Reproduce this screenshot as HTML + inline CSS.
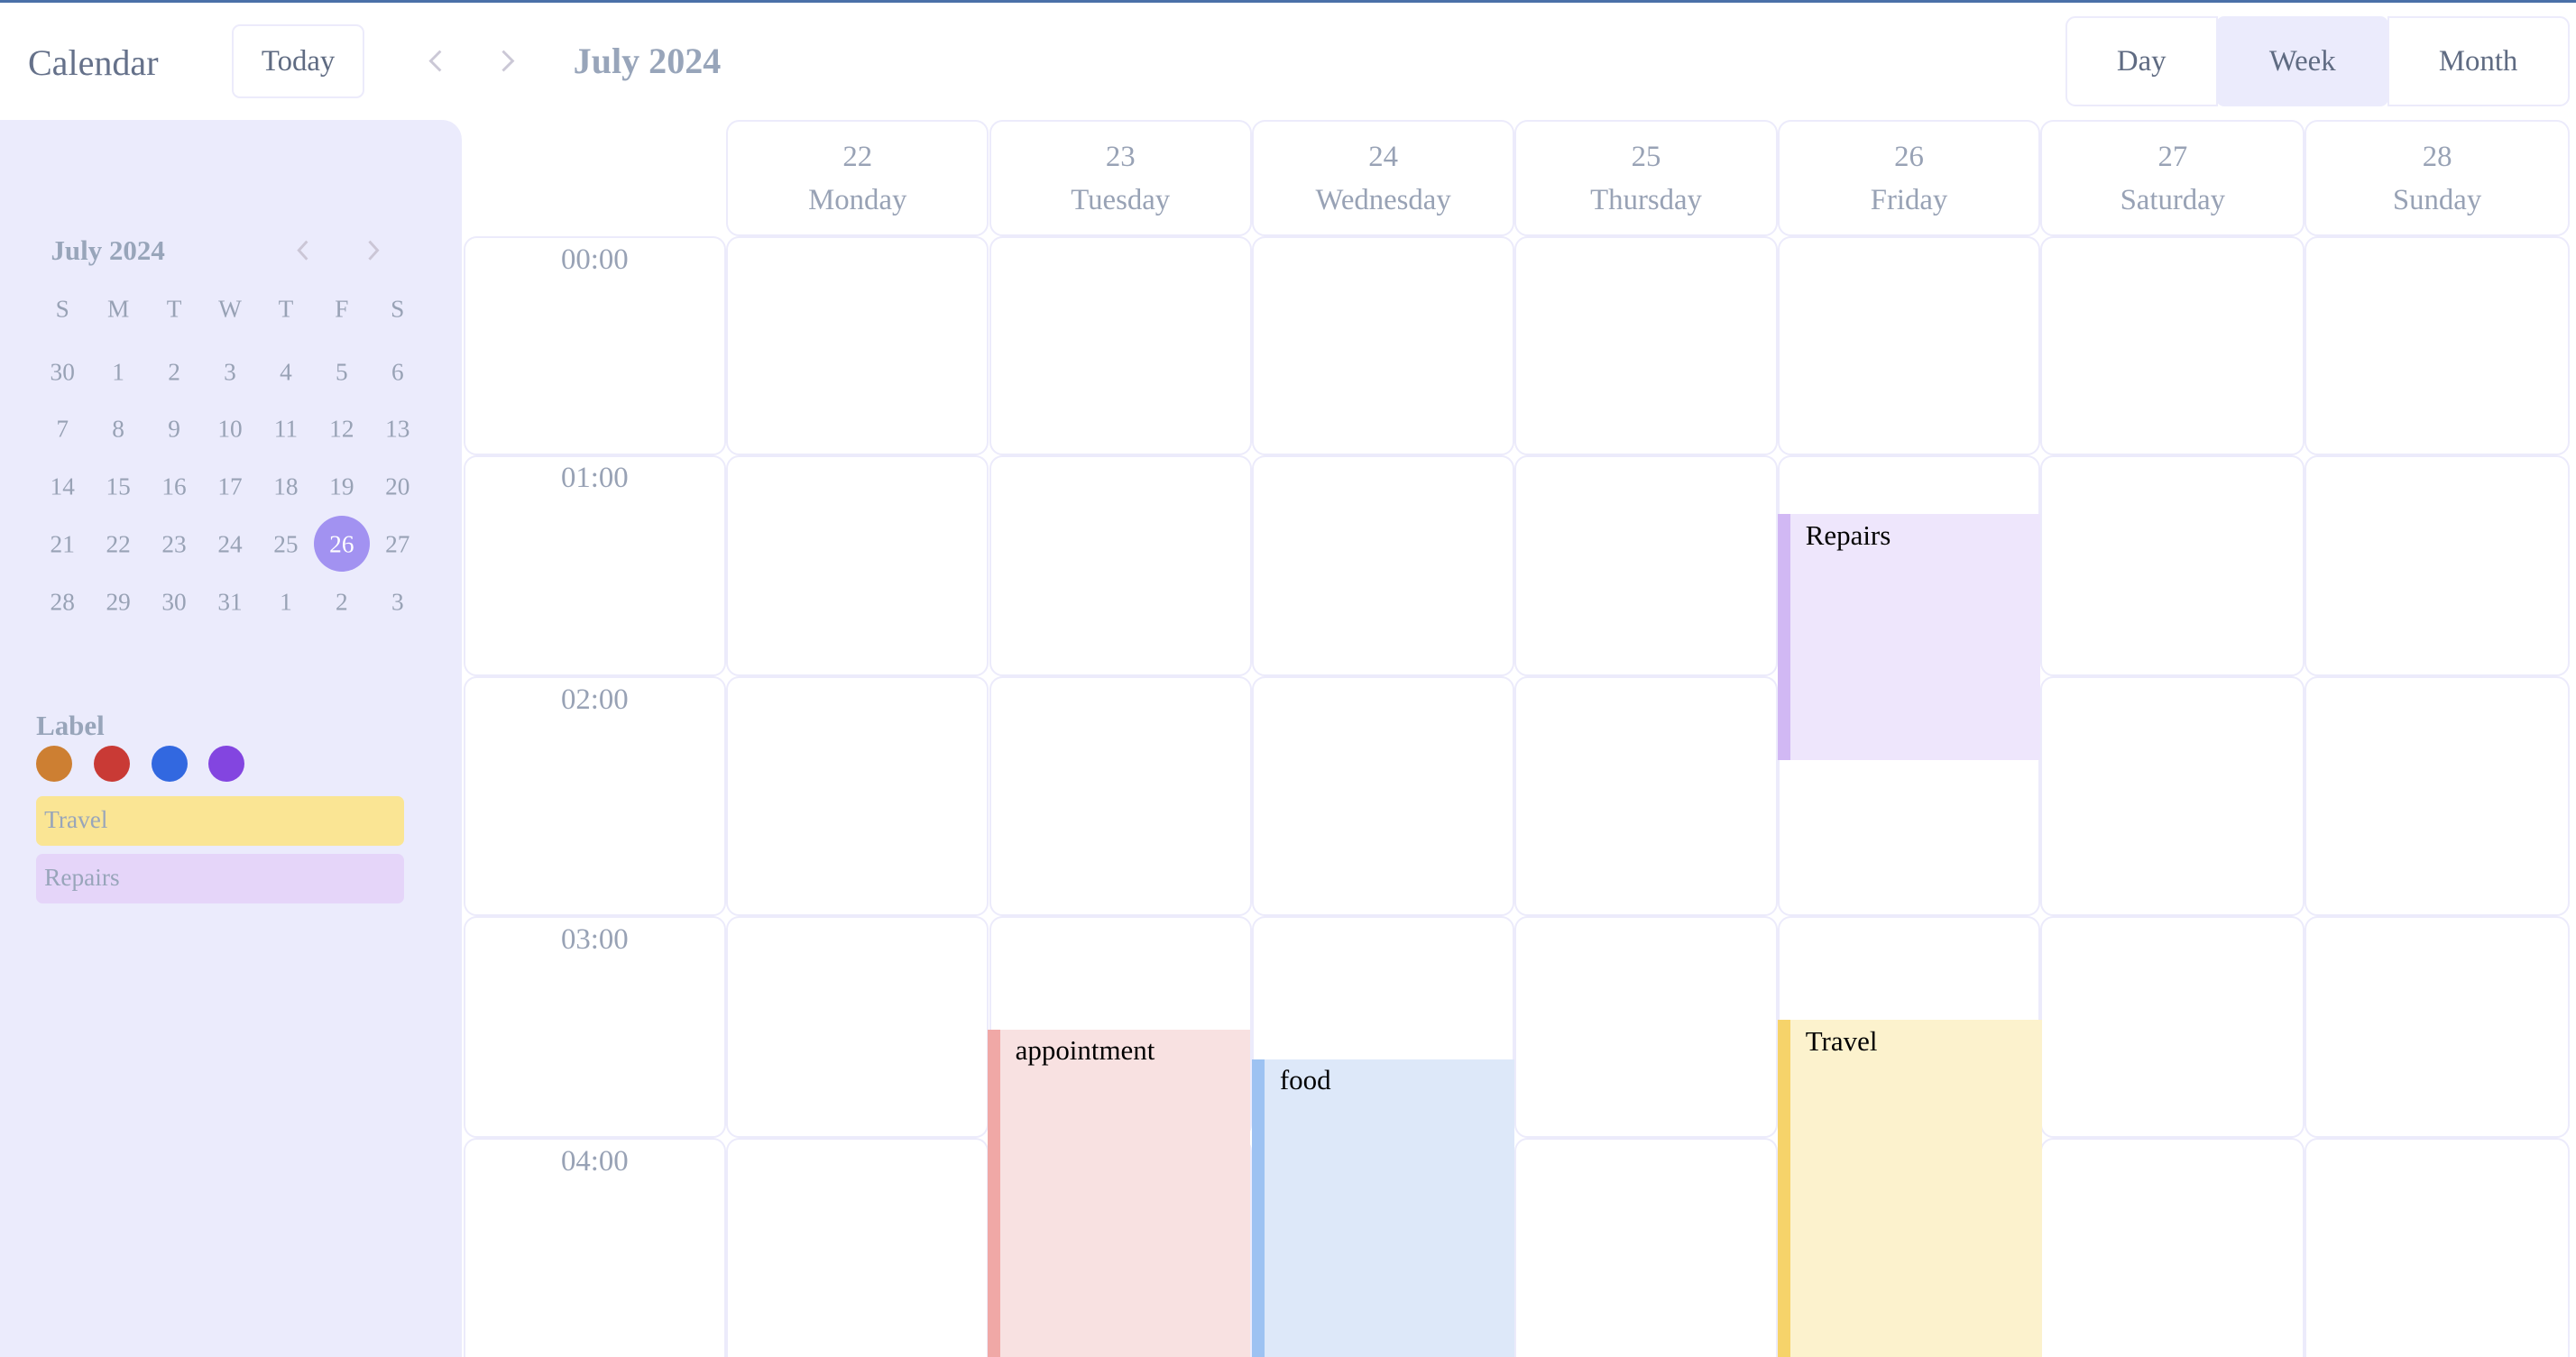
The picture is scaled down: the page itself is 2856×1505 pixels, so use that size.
<!DOCTYPE html>
<html><head><meta charset="utf-8"><style>
*{box-sizing:border-box;margin:0;padding:0}
html,body{width:2856px;height:1504px;overflow:hidden;background:#fff}
#r{position:absolute;left:0;top:0;width:1568px;height:826px;zoom:1.82143;font-family:"Liberation Serif",serif;overflow:hidden}
.a{position:absolute}
.c{position:absolute;border:1.5px solid #ecebfb;border-radius:8px;background:#fff}
.t{position:absolute;white-space:nowrap}
.btn{position:absolute;border:1.5px solid #ecebfb;border-radius:5px;color:#5f6b82;font-size:18px;display:flex;align-items:center;justify-content:center}
.hd{color:#98a2b5;font-size:18px;text-align:center;line-height:26px;padding-top:9px}
.tm{color:#98a2b5;font-size:18px;text-align:center;padding-top:3px}
.mc{position:absolute;width:34px;text-align:center;color:#98a2b5;font-size:15px;transform:translate(-17px,-8px)}
.ev{position:absolute;font-size:17px;color:#000;padding:3px 0 0 17px}
.ev i{position:absolute;left:0;top:0;bottom:0;width:8px}
</style></head><body><div id="r">
<div class="a" style="left:0;top:0;width:1568px;height:1.5px;background:#4a70a8"></div>
<div class="t" style="left:17px;top:25px;font-size:22px;color:#65718a">Calendar</div>
<div class="btn" style="left:141px;top:15px;width:81px;height:45px">Today</div>
<svg class="a" style="left:259px;top:29px" width="12" height="16"><path d="M9 2L3 8l6 6" stroke="#cbc8d6" stroke-width="1.6" fill="none"/></svg>
<svg class="a" style="left:303px;top:29px" width="12" height="16"><path d="M3 2l6 6-6 6" stroke="#cbc8d6" stroke-width="1.6" fill="none"/></svg>
<div class="t" style="left:349px;top:24px;font-size:22px;font-weight:bold;color:#98a5ba">July 2024</div>
<div class="btn" style="left:1257px;top:10px;width:93px;height:55px;border-radius:6px 0 0 6px">Day</div>
<div class="btn" style="left:1349px;top:10px;width:105px;height:55px;background:#ebebfc;border-color:#ebebfc">Week</div>
<div class="btn" style="left:1453px;top:10px;width:111px;height:55px;border-radius:0 6px 6px 0">Month</div>

<div class="a" style="left:0;top:73px;width:281px;height:760px;background:#ebebfc;border-radius:0 12px 0 0"></div>
<div class="t" style="left:31px;top:143px;font-size:17px;font-weight:bold;color:#98a5ba">July 2024</div>
<svg class="a" style="left:178px;top:145px" width="12" height="15"><path d="M9 2L4 7.5l5 5.5" stroke="#cbc6d6" stroke-width="1.6" fill="none"/></svg>
<svg class="a" style="left:222px;top:145px" width="12" height="15"><path d="M3 2l5 5.5-5 5.5" stroke="#cbc6d6" stroke-width="1.6" fill="none"/></svg>
<div class="a" style="left:191px;top:314px;width:34px;height:34px;border-radius:50%;background:#a292f1"></div>
<div id="mini"></div>
<div class="t" style="left:22px;top:432px;font-size:17px;font-weight:bold;color:#98a5ba">Label</div>
<div class="a" style="left:22px;top:454px;width:22px;height:22px;border-radius:50%;background:#cd7f32"></div>
<div class="a" style="left:57px;top:454px;width:22px;height:22px;border-radius:50%;background:#c93a35"></div>
<div class="a" style="left:92px;top:454px;width:22px;height:22px;border-radius:50%;background:#3268e0"></div>
<div class="a" style="left:127px;top:454px;width:22px;height:22px;border-radius:50%;background:#8345e0"></div>
<div class="a" style="left:22px;top:485px;width:224px;height:30px;background:#fae594;border-radius:4px;color:#98a5ba;font-size:15px;padding:6px 0 0 5px">Travel</div>
<div class="a" style="left:22px;top:520px;width:224px;height:30px;background:#e5d5f9;border-radius:4px;color:#98a5ba;font-size:15px;padding:6px 0 0 5px">Repairs</div>

<div id="grid"></div>

<div class="ev" style="left:1082px;top:313px;width:160px;height:150px;background:#eee6fc"><i style="background:#d1b8f4"></i>Repairs</div>
<div class="ev" style="left:601px;top:627px;width:160px;height:200px;background:#f8e1e1"><i style="background:#f0a8a6"></i>appointment</div>
<div class="ev" style="left:762px;top:645px;width:160px;height:190px;background:#dde8f9"><i style="background:#9dc2f2"></i>food</div>
<div class="ev" style="left:1082px;top:621px;width:161px;height:210px;background:#fcf2cd"><i style="background:#f6d36a"></i>Travel</div>
</div>
<script>
(function(){
var m=document.getElementById('mini'),h='';
var xs=[38,72,106,140,174,208,242],hd=['S','M','T','W','T','F','S'];
hd.forEach(function(d,i){h+='<div class="mc" style="left:'+xs[i]+'px;top:188px">'+d+'</div>';});
var rows=[[30,1,2,3,4,5,6],[7,8,9,10,11,12,13],[14,15,16,17,18,19,20],[21,22,23,24,25,26,27],[28,29,30,31,1,2,3]];
var ys=[226,261,296,331,366];
rows.forEach(function(r,j){r.forEach(function(d,i){var s=(j==3&&i==5)?';color:#fff':'';h+='<div class="mc" style="left:'+xs[i]+'px;top:'+ys[j]+'px'+s+'">'+d+'</div>';});});
m.outerHTML=h;
var g=document.getElementById('grid'),o='';
var cx=[442,602,762,922,1082,1242,1403,1564];
var days=[[22,'Monday'],[23,'Tuesday'],[24,'Wednesday'],[25,'Thursday'],[26,'Friday'],[27,'Saturday'],[28,'Sunday']];
for(var i=0;i<7;i++)o+='<div class="c hd" style="left:'+cx[i]+'px;top:73px;width:'+(cx[i+1]-cx[i])+'px;height:71px">'+days[i][0]+'<br>'+days[i][1]+'</div>';
var ry=[144,277,412,558,693,840];
for(var r=0;r<5;r++){
o+='<div class="c tm" style="left:282px;top:'+ry[r]+'px;width:160px;height:'+(ry[r+1]-ry[r])+'px">0'+r+':00</div>';
for(var i=0;i<7;i++)o+='<div class="c" style="left:'+cx[i]+'px;top:'+ry[r]+'px;width:'+(cx[i+1]-cx[i])+'px;height:'+(ry[r+1]-ry[r])+'px"></div>';}
g.outerHTML=o;
})();
</script>
</body></html>
